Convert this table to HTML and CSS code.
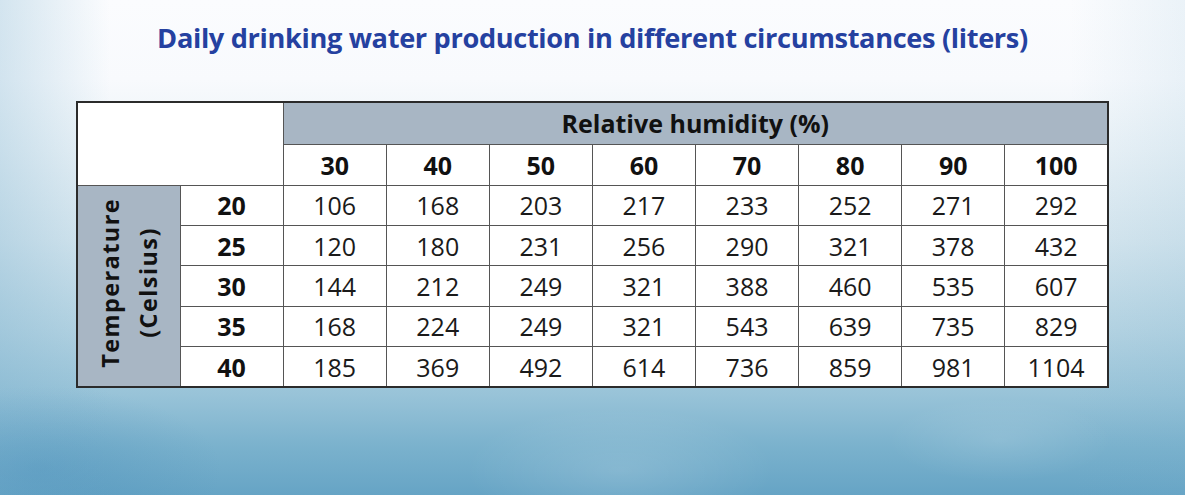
FILE: index.html
```html
<!DOCTYPE html>
<html lang="en">
<head>
<meta charset="utf-8">
<title>Daily drinking water production</title>
<link rel="stylesheet" href="styles.css">
</head>
<body>
<div class="page">
  <h1 class="title">Daily drinking water production in different circumstances (liters)</h1>
  <table class="grid">
    <colgroup>
      <col class="c-lab"><col class="c-lab">
      <col class="c-num"><col class="c-num"><col class="c-num"><col class="c-num">
      <col class="c-num"><col class="c-num"><col class="c-num"><col class="c-num">
    </colgroup>
    <thead>
      <tr class="r-top">
        <th class="blank" colspan="2" rowspan="2"></th>
        <th class="band" colspan="8">Relative humidity (%)</th>
      </tr>
      <tr class="r-hum">
        <th>30</th><th>40</th><th>50</th><th>60</th><th>70</th><th>80</th><th>90</th><th>100</th>
      </tr>
    </thead>
    <tbody>
      <tr>
        <th class="side" rowspan="5"><span class="vert">Temperature<br>(Celsius)</span></th>
        <th class="temp">20</th><td>106</td><td>168</td><td>203</td><td>217</td><td>233</td><td>252</td><td>271</td><td>292</td>
      </tr>
      <tr><th class="temp">25</th><td>120</td><td>180</td><td>231</td><td>256</td><td>290</td><td>321</td><td>378</td><td>432</td></tr>
      <tr><th class="temp">30</th><td>144</td><td>212</td><td>249</td><td>321</td><td>388</td><td>460</td><td>535</td><td>607</td></tr>
      <tr><th class="temp">35</th><td>168</td><td>224</td><td>249</td><td>321</td><td>543</td><td>639</td><td>735</td><td>829</td></tr>
      <tr><th class="temp">40</th><td>185</td><td>369</td><td>492</td><td>614</td><td>736</td><td>859</td><td>981</td><td>1104</td></tr>
    </tbody>
  </table>
</div>
</body>
</html>
```
FILE: styles.css
```css
html, body {
  margin: 0;
  padding: 0;
}
body {
  width: 1185px;
  height: 495px;
  overflow: hidden;
  font-family: "Open Sans", "Liberation Sans", sans-serif;
  background:
    radial-gradient(ellipse 220px 90px at 620px 470px, rgba(255,255,255,0.15), rgba(255,255,255,0) 70%),
    radial-gradient(ellipse 160px 60px at 1000px 440px, rgba(255,255,255,0.12), rgba(255,255,255,0) 70%),
    radial-gradient(ellipse 260px 120px at 40px 470px, rgba(70,140,185,0.35), rgba(70,140,185,0) 70%),
    linear-gradient(to right, rgba(120,175,205,0.3) 0, rgba(120,175,205,0) 110px, rgba(120,175,205,0) 1070px, rgba(120,175,205,0.12) 1185px),
    linear-gradient(to bottom, #fbfcfe 0, #f8fafd 80px, #eaf2f7 150px, #d4e5ee 240px, #b4d3e2 330px, #98c3d8 395px, #7bb2cd 445px, #66a4c5 495px);
}
.page {
  display: flex;
  flex-direction: column;
  align-items: center;
}
.title {
  margin: 19px 0 0;
  font-size: 27.2px;
  line-height: 38px;
  font-weight: 700;
  color: #2541a0;
  letter-spacing: -0.35px;
}
.grid {
  margin-top: 44px;
  border-collapse: collapse;
  table-layout: fixed;
  width: 1031px;
  background: #fff;
  border: 2px solid #2b2b2b;
  color: #111;
}
.c-lab { width: 103px; }
.c-num { width: 103.1px; }
.grid th, .grid td {
  border: 1px solid #555;
  padding: 0;
  text-align: center;
  vertical-align: middle;
  font-size: 25px;
  line-height: 30px;
}
.grid th { font-weight: 700; }
.grid td { font-weight: 400; color: #1a1a1a; }
.r-top { height: 42px; }
.r-hum { height: 41px; }
.grid tbody tr { height: 40.4px; }
.blank { background: #fff; border-bottom: 1px solid #333; }
.band {
  background: #a8b6c4;
  font-size: 25px;
  padding-top: 2px;
}
.side {
  background: #a8b6c4;
  border-top: 2px solid #2b2b2b;
}
.vert {
  display: inline-block;
  writing-mode: vertical-rl;
  transform: rotate(180deg);
  font-size: 23.5px;
  line-height: 38px;
  letter-spacing: 1.4px;
  font-weight: 700;
}
```
